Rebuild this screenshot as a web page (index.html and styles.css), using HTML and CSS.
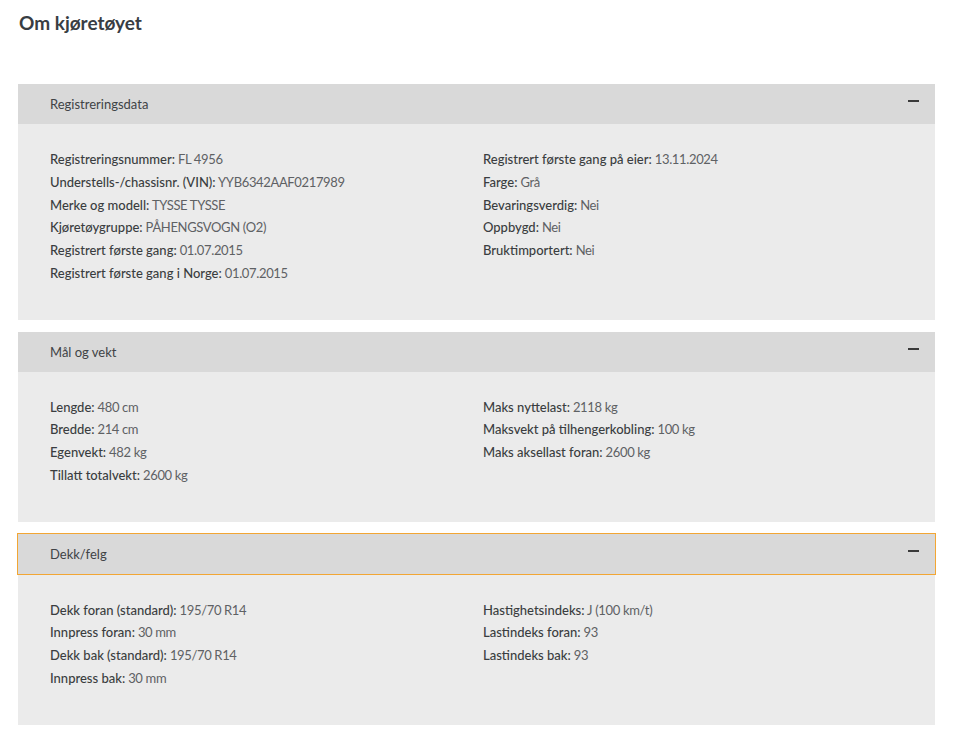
FILE: index.html
```html
<!DOCTYPE html>
<html lang="no">
<head>
  <meta charset="UTF-8">
  <title>Om kjøretøyet</title>
  <link rel="stylesheet" href="styles.css">
</head>
<body>
  <div class="page">
    <h1 class="title">Om kjøretøyet</h1>

    <section class="panel">
      <div class="panel-head">
        <span>Registreringsdata</span>
        <span class="toggle"></span>
      </div>
      <div class="panel-body">
        <ul class="col">
          <li><b>Registreringsnummer:</b> FL 4956</li>
          <li><b>Understells-/chassisnr. (VIN):</b> YYB6342AAF0217989</li>
          <li><b>Merke og modell:</b> TYSSE TYSSE</li>
          <li><b>Kjøretøygruppe:</b> PÅHENGSVOGN (O2)</li>
          <li><b>Registrert første gang:</b> 01.07.2015</li>
          <li><b>Registrert første gang i Norge:</b> 01.07.2015</li>
        </ul>
        <ul class="col">
          <li><b>Registrert første gang på eier:</b> 13.11.2024</li>
          <li><b>Farge:</b> Grå</li>
          <li><b>Bevaringsverdig:</b> Nei</li>
          <li><b>Oppbygd:</b> Nei</li>
          <li><b>Bruktimportert:</b> Nei</li>
        </ul>
      </div>
    </section>

    <section class="panel">
      <div class="panel-head">
        <span>Mål og vekt</span>
        <span class="toggle"></span>
      </div>
      <div class="panel-body">
        <ul class="col">
          <li><b>Lengde:</b> 480 cm</li>
          <li><b>Bredde:</b> 214 cm</li>
          <li><b>Egenvekt:</b> 482 kg</li>
          <li><b>Tillatt totalvekt:</b> 2600 kg</li>
        </ul>
        <ul class="col">
          <li><b>Maks nyttelast:</b> 2118 kg</li>
          <li><b>Maksvekt på tilhengerkobling:</b> 100 kg</li>
          <li><b>Maks aksellast foran:</b> 2600 kg</li>
        </ul>
      </div>
    </section>

    <section class="panel">
      <div class="panel-head focused">
        <span>Dekk/felg</span>
        <span class="toggle"></span>
      </div>
      <div class="panel-body">
        <ul class="col">
          <li><b>Dekk foran (standard):</b> 195/70 R14</li>
          <li><b>Innpress foran:</b> 30 mm</li>
          <li><b>Dekk bak (standard):</b> 195/70 R14</li>
          <li><b>Innpress bak:</b> 30 mm</li>
        </ul>
        <ul class="col">
          <li><b>Hastighetsindeks:</b> J (100 km/t)</li>
          <li><b>Lastindeks foran:</b> 93</li>
          <li><b>Lastindeks bak:</b> 93</li>
        </ul>
      </div>
    </section>
  </div>
</body>
</html>
```

FILE: styles.css
```css
* {
  margin: 0;
  padding: 0;
  box-sizing: border-box;
}

body {
  font-family: Lato, 'Noto Sans', sans-serif;
  color: #3a3d40;
  background: #fff;
}

.page {
  padding: 10px 25px 0 18px;
}

.title {
  font-size: 19px;
  font-weight: 700;
  color: #383d43;
  line-height: 25px;
  padding-left: 1px;
  margin-bottom: 49px;
}

.panel {
  margin-bottom: 12px;
}

.panel-head {
  height: 40px;
  display: flex;
  align-items: center;
  justify-content: space-between;
  padding: 0 15px 0 31px;
  background: #d9d9d9;
  border: 1px solid #d9d9d9;
  font-size: 13px;
  color: #404346;
}

.panel-head.focused {
  height: 42px;
  margin: -1px -1px 0;
  padding: 0 16px 0 32px;
  border-color: #f2a634;
}

.toggle {
  width: 11px;
  height: 2px;
  background: #3a3a3a;
  margin-top: -6px;
}

.panel-body {
  background: #ebebeb;
  padding: 24px 32px 35px;
  display: grid;
  grid-template-columns: 433px 1fr;
}

.col {
  list-style: none;
  font-size: 13px;
  line-height: 22.75px;
  color: #5e6164;
  letter-spacing: -0.35px;
}

.col b {
  font-weight: 500;
  letter-spacing: 0;
  color: #3a3d40;
}
```
